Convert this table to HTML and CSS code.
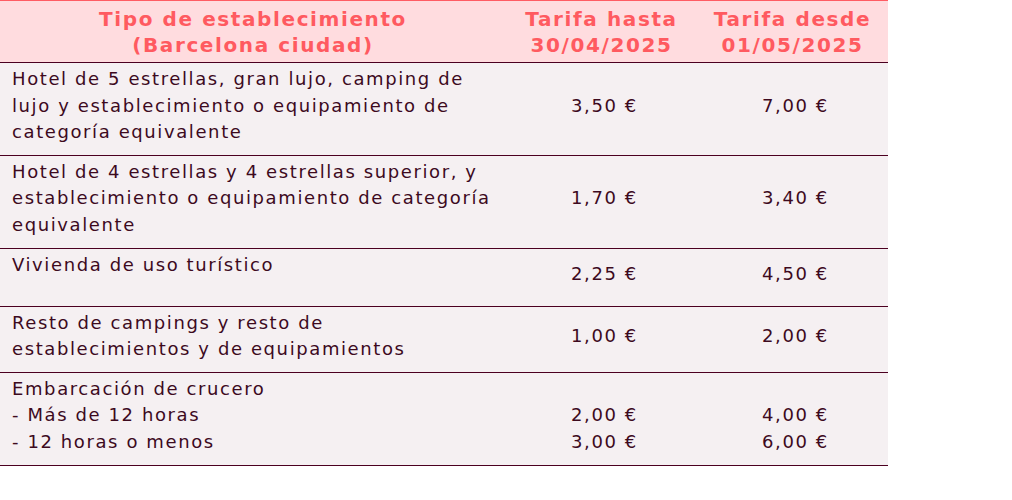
FILE: index.html
```html
<!DOCTYPE html>
<html lang="es">
<head>
<meta charset="utf-8">
<link rel="stylesheet" href="styles.css">
</head>
<body>
<table class="tarifas">
  <thead>
    <tr>
      <th class="col-tipo">Tipo de establecimiento<br>(Barcelona ciudad)</th>
      <th class="col-precio">Tarifa hasta<br>30/04/2025</th>
      <th class="col-precio">Tarifa desde<br>01/05/2025</th>
    </tr>
  </thead>
  <tbody>
    <tr>
      <td class="tipo">Hotel de 5 estrellas, gran lujo, camping de lujo y establecimiento o equipamiento de categoría equivalente</td>
      <td class="precio">3,50 €</td>
      <td class="precio">7,00 €</td>
    </tr>
    <tr>
      <td class="tipo">Hotel de 4 estrellas y 4 estrellas superior, y establecimiento o equipamiento de categoría equivalente</td>
      <td class="precio">1,70 €</td>
      <td class="precio">3,40 €</td>
    </tr>
    <tr class="fila-alta">
      <td class="tipo">Vivienda de uso turístico</td>
      <td class="precio">2,25 €</td>
      <td class="precio">4,50 €</td>
    </tr>
    <tr>
      <td class="tipo">Resto de campings y resto de establecimientos y de equipamientos</td>
      <td class="precio">1,00 €</td>
      <td class="precio">2,00 €</td>
    </tr>
    <tr>
      <td class="tipo">Embarcación de crucero<br>- Más de 12 horas<br>- 12 horas o menos</td>
      <td class="precio"><br>2,00 €<br>3,00 €</td>
      <td class="precio"><br>4,00 €<br>6,00 €</td>
    </tr>
  </tbody>
</table>
</body>
</html>
```

FILE: styles.css
```css
html, body {
  margin: 0;
  padding: 0;
  background: #ffffff;
}

.tarifas {
  width: 888px;
  border-collapse: collapse;
  font-family: "DejaVu Sans", Verdana, sans-serif;
  font-size: 18px;
  line-height: 26.6px;
  letter-spacing: 1.6px;
  color: #3d0a1e;
}

.tarifas thead tr {
  background: #ffdcdf;
  border-top: 1px solid #ff5c63;
  border-bottom: 1px solid #4b0020;
}

.tarifas th {
  color: #ff5a60;
  font-size: 20px;
  line-height: 26px;
  letter-spacing: 1.6px;
  font-weight: bold;
  text-align: center;
  vertical-align: bottom;
  padding: 5px 6px 4px;
}

.col-tipo {
  width: 494px;
}

.col-precio {
  width: 179px;
}

.tarifas tbody tr {
  background: #f5f0f2;
  border-bottom: 1px solid #4b0020;
}

.tarifas td {
  padding: 3px 6px 9px 12px;
}

.tipo {
  text-align: left;
  vertical-align: top;
}

.precio {
  text-align: center;
  vertical-align: middle;
  padding-left: 4px;
  padding-right: 8px;
}

.fila-alta {
  height: 58px;
}
```
